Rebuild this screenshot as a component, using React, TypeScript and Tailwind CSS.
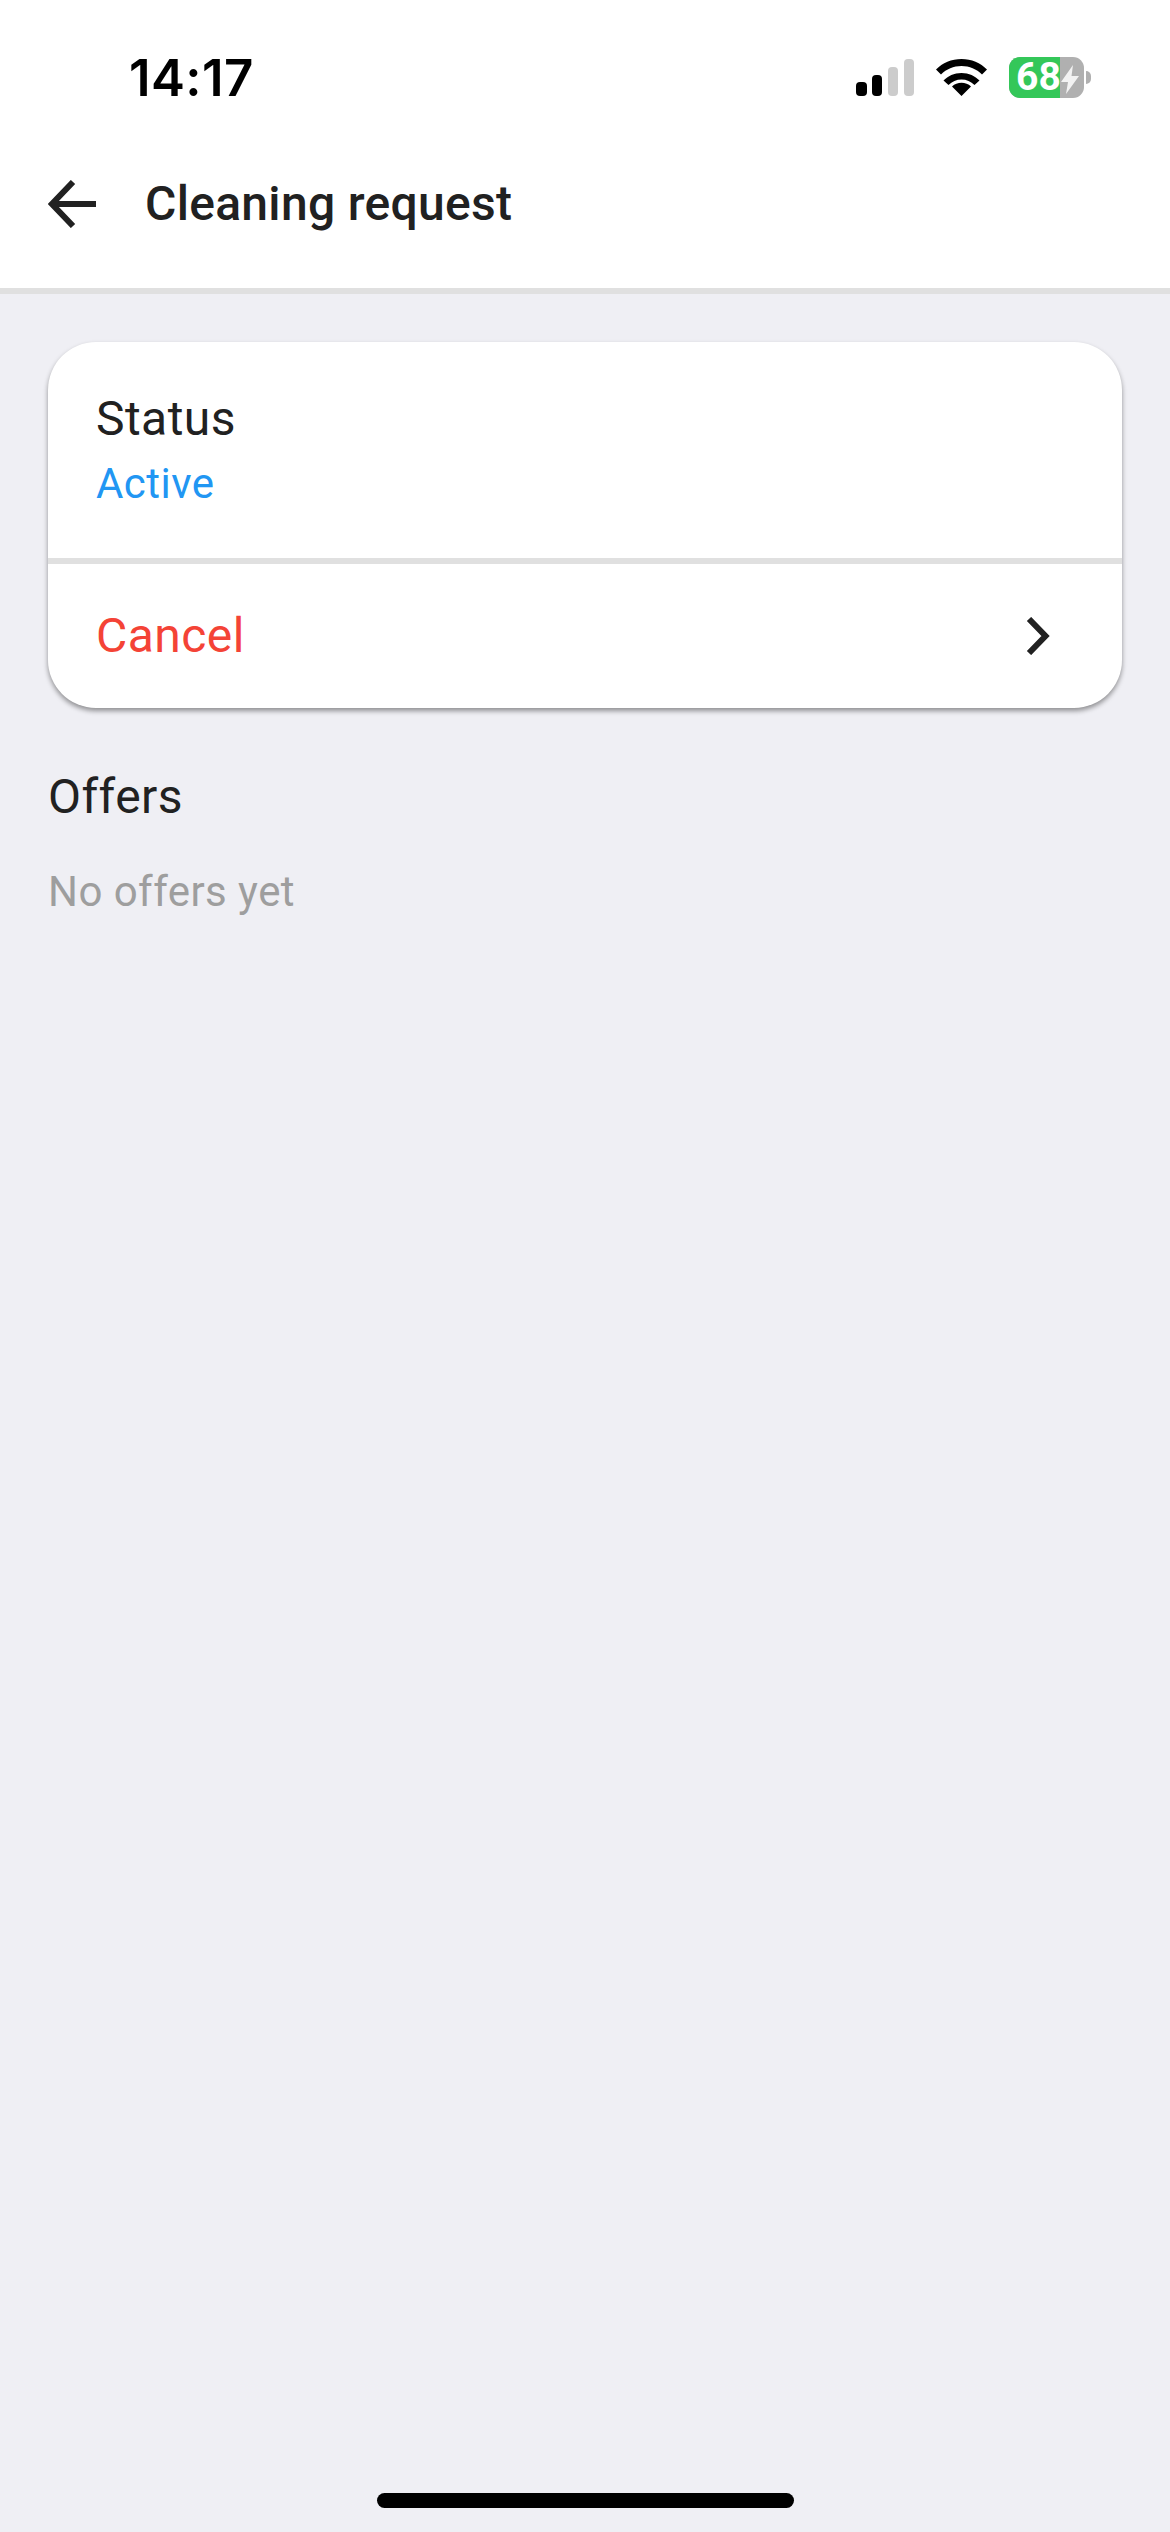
import React from 'react';

const StatusBar: React.FC = () => (
  <div className="h-[96px] pl-[129px] pr-[79px] pt-[50px] flex justify-between items-start">
    <span className="font-['Inter',sans-serif] font-semibold text-[51px] leading-[56px] text-black tracking-[0.4px]">14:17</span>
    <div className="flex items-center gap-[22px] mt-[7px]">
      <svg width="58" height="37" viewBox="0 0 58 37">
        <rect x="0" y="23" width="11" height="14" rx="4" fill="#000" />
        <rect x="16" y="16" width="10" height="21" rx="4" fill="#000" />
        <rect x="32" y="8" width="10" height="29" rx="4" fill="#ccc" />
        <rect x="48" y="0" width="10" height="37" rx="4" fill="#ccc" />
      </svg>
      <svg width="51" height="37" viewBox="0 0 51 37">
        <path d="M25.5 37 L16 27.5 C21 22.5 30 22.5 35 27.5 Z M25.5 14 C33 14 39 17 43.5 21.5 L38.5 26 C35 22.500 30.500 20.500 25.500 20.500 C20.500 20.500 16 22.500 12.500 26 L7.500 21.500 C12 17 18 14 25.500 14 Z M25.500 0 C35.500 0 44.500 4 51 10.500 L46 15.500 C40.500 10 33.500 7 25.500 7 C17.500 7 10.500 10 5 15.500 L0 10.500 C6.500 4 15.500 0 25.500 0 Z" fill="#000" />
      </svg>
      <div className="flex items-center">
        <div className="relative w-[75px] h-[41px] rounded-[11px] bg-[#b0b0b0]">
          <div className="w-[51px] h-full rounded-l-[11px] bg-[#34c759]" />
          <span className="absolute left-[7px] top-0 font-['Roboto',sans-serif] font-bold text-[39px] leading-[41px] text-white">68</span>
          <svg className="absolute left-[52px] top-[8px]" width="18" height="29" viewBox="0 0 18 29">
            <path d="M12 0 L0 17 H7 L5 29 L18 11 H10.500 Z" fill="#f2f2f2" />
          </svg>
        </div>
        <div className="w-[5px] h-[13px] ml-[2px] rounded-r-full bg-[#b0b0b0]" />
      </div>
    </div>
  </div>
);

export default function App() {
  return (
    <div className="w-[1170px] h-[2532px] flex flex-col bg-[#efeff4] font-['Roboto',sans-serif] text-[#212121] overflow-hidden">
      <div className="bg-white border-b-[6px] border-[#e0e0e0] h-[294px]">
        <StatusBar />
        <div className="flex items-center h-[192px] pt-[24px] pl-[48px]">
          <svg width="48" height="48" viewBox="0 0 48 48" fill="none" stroke="#212121" strokeWidth="6">
            <path d="M48 24 H5 M25 2 L4 24 L25 46" />
          </svg>
          <h1 className="ml-[49px] text-[48px] font-medium leading-[56px] tracking-[0.3px]">Cleaning request</h1>
        </div>
      </div>

      <div className="px-[48px] pt-[48px]">
        <div className="bg-white rounded-[48px] shadow-[0_3px_5px_rgba(0,0,0,0.4)] overflow-hidden">
          <div className="h-[222px] px-[48px] pt-[49px] border-b-[6px] border-[#e0e0e0]">
            <div className="text-[48px] leading-[56px] tracking-[0.45px]">Status</div>
            <div className="text-[42px] leading-[50px] mt-[12px] tracking-[0.45px] text-[#2196f3]">Active</div>
          </div>
          <div className="h-[144px] pl-[48px] pr-[72px] flex items-center justify-between">
            <span className="text-[48px] leading-[56px] tracking-[0.45px] text-[#f44336]">Cancel</span>
            <svg width="24" height="38" viewBox="0 0 24 38" fill="none" stroke="#212121" strokeWidth="6">
              <path d="M3 2 L19.500 19 L3 36" />
            </svg>
          </div>
        </div>

        <h2 className="mt-[61px] text-[48px] leading-[56px] font-normal tracking-[0.45px]">Offers</h2>
        <p className="mt-[42px] text-[42px] leading-[50px] tracking-[0.45px] text-[#9e9e9e]">No offers yet</p>
      </div>

      <div className="mt-auto mb-[24px] mx-auto w-[417px] h-[15px] rounded-full bg-black" />
    </div>
  );
}
